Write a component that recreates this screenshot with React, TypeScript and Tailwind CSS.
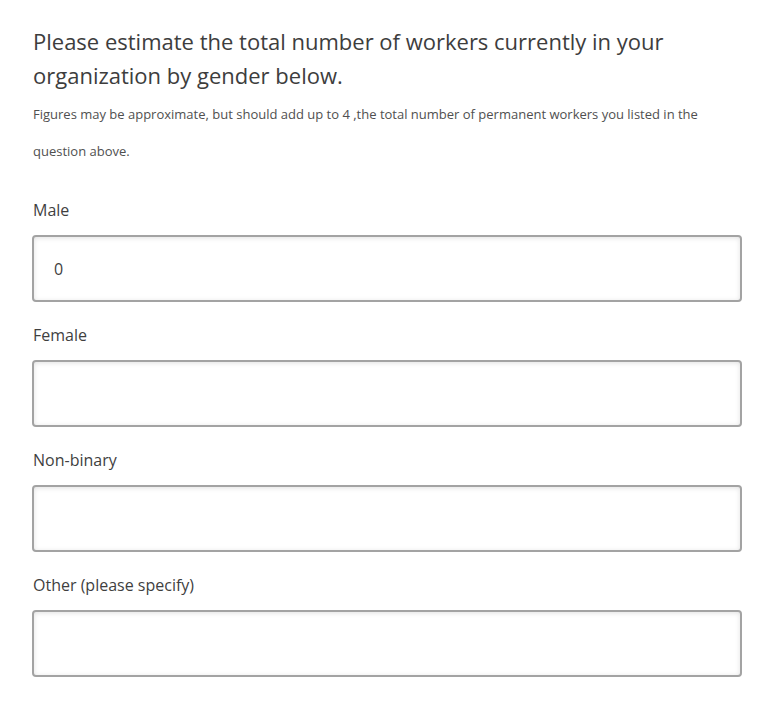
const fields = [
  { label: 'Male', value: '0' },
  { label: 'Female', value: '' },
  { label: 'Non-binary', value: '' },
  { label: 'Other (please specify)', value: '' },
];

export default function App() {
  return (
    <div className="min-h-screen bg-white text-[#3f3f3f]" style={{ fontFamily: '"Open Sans", "Liberation Sans", sans-serif' }}>
      <div className="pl-[33px] pr-[35px] pt-[24px]">
        <h1 className="text-[22px] leading-[34px] font-normal text-[#3d3d3d]">
          Please estimate the total number of workers currently in your organization by gender below.
        </h1>
        <p className="mt-[3.5px] text-[13px] leading-[37px] text-[#505050]">
          Figures may be approximate, but should add up to 4 ,the total number of permanent workers you listed in the
          <br />
          question above.
        </p>
        <div className="mt-[28.5px] flex flex-col">
          {fields.map((f, i) => (
            <div key={f.label} className={i > 0 ? 'mt-[21px]' : ''}>
              <label className="block text-[16px] leading-[24px] text-[#3f3f3f]">{f.label}</label>
              <input
                type="text"
                defaultValue={f.value}
                className="mt-[13px] -ml-[1px] block h-[67px] w-[710px] rounded-[4px] border-2 border-[#a3a3a3] bg-white px-[20px] text-[16px] text-[#3f3f3f] shadow-[inset_0_1px_5px_rgba(0,0,0,0.12)] outline-none"
              />
            </div>
          ))}
        </div>
      </div>
    </div>
  );
}
